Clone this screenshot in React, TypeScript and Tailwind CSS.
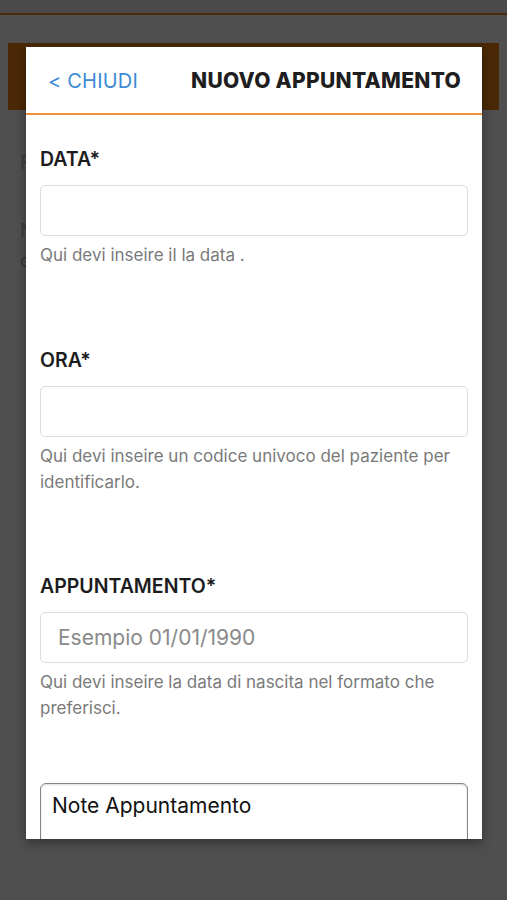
const font = { fontFamily: 'Inter, "Liberation Sans", sans-serif' };

function Field({
  label,
  help,
  placeholder,
}: {
  label: string;
  help: string;
  placeholder?: string;
}) {
  return (
    <div className="flex flex-col">
      <label className="text-[19.5px] font-semibold text-[#1c1c1e] leading-[24px]">{label}</label>
      <div className="mt-[14px] h-[51px] rounded-[5px] border border-[#dcdcdc] flex items-center px-[17px]">
        {placeholder && <span className="text-[21px] text-[#8a8a8a]">{placeholder}</span>}
      </div>
      <p className="mt-[6px] text-[17px] leading-[26px] text-[#7a7a7a] pr-[4px]">{help}</p>
    </div>
  );
}

export default function App() {
  return (
    <div className="relative h-[900px] w-[507px] overflow-hidden bg-[#4f4f4f]" style={font}>
      {/* dimmed page behind the modal */}
      <div className="h-[13px] bg-[#4a4a4a]" />
      <div className="h-[2px] bg-[#4b2a0c]" />
      <div className="mx-[8px] mt-[28px] h-[67px] bg-[#4a2805]" />
      <div className="pl-[20px] pt-[38px] text-[18px] leading-[30px] text-[#3a3a3a] flex flex-col">
        <span>F</span>
        <span className="mt-[38px]">N</span>
        <span>c</span>
      </div>

      {/* modal */}
      <div className="absolute left-[26px] top-[47px] w-[456px] h-[792px] bg-white overflow-hidden shadow-[0_4px_10px_rgba(0,0,0,0.35)]">
        <div className="h-[68px] flex items-center justify-between pl-[22px] pr-[21px] pt-[2px] border-b-2 border-[#f0913a]">
          <span className="text-[20px] text-[#3d8bd4] tracking-[0.2px]">&lt; CHIUDI</span>
          <span className="text-[21px] font-extrabold text-[#1e1e20] tracking-[0.3px]">NUOVO APPUNTAMENTO</span>
        </div>
        <div className="pl-[14px] pr-[14px] pt-[32px] flex flex-col">
          <Field label="DATA*" help="Qui devi inseire il la data ." />
          <div className="h-[80px]" />
          <Field
            label="ORA*"
            help="Qui devi inseire un codice univoco del paziente per identificarlo."
          />
          <div className="h-[79px]" />
          <Field
            label="APPUNTAMENTO*"
            help="Qui devi inseire la data di nascita nel formato che preferisci."
            placeholder="Esempio 01/01/1990"
          />
          <div className="mt-[62px] h-[80px] rounded-[6px] border-[1.5px] border-[#858585] shadow-[inset_0_1px_2px_rgba(0,0,0,0.15)] px-[11px] pt-[6px]">
            <span className="text-[21px] text-[#111]">Note Appuntamento</span>
          </div>
        </div>
      </div>
    </div>
  );
}
